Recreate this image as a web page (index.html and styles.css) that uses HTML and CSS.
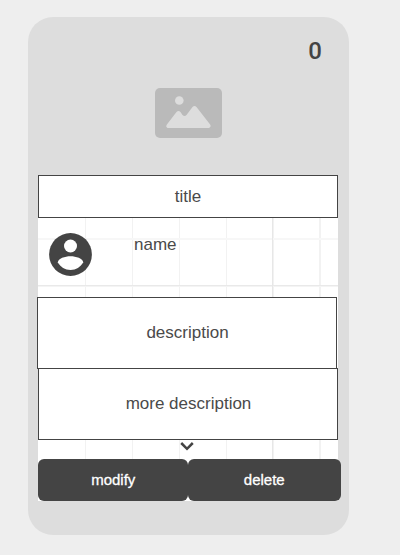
FILE: index.html
```html
<!DOCTYPE html>
<html lang="en">
<head>
<meta charset="utf-8">
<title>Card</title>
<link rel="stylesheet" href="styles.css">
</head>
<body>
<main class="card">
  <header class="cover">
    <span class="count">0</span>
    <svg class="image-icon" width="67" height="50" viewBox="0 0 67 50">
      <rect width="67" height="50" rx="5" fill="#bababa"/>
      <circle cx="24.3" cy="12.5" r="4.300" fill="#ddd"/>
      <path d="M12.500 40Q10.500 39 11.500 37L21.500 24Q23.500 22 25.500 24L27.500 27Q29.500 29 31.500 27L37.500 19Q39.500 17 41.500 19L55.500 37Q56.300 39 54 40Z" fill="#ddd"/>
    </svg>
  </header>
  <section class="panel">
    <div class="box title">title</div>
    <div class="author">
      <svg class="avatar" width="43" height="43" viewBox="0 0 43 43">
        <circle cx="21.500" cy="21.500" r="21.400" fill="#444"/>
        <circle cx="21.500" cy="13" r="6.500" fill="#fff"/>
        <path d="M8.800 29.500C9 25.500 16 23.300 21.500 23.300S34 25.500 34.200 29.500C31.500 34 27 37 21.500 37S11.500 34 8.800 29.500Z" fill="#fff"/>
      </svg>
      <span class="name">name</span>
    </div>
    <div class="box description">description</div>
    <div class="box more">more description</div>
    <div class="expand">
      <svg width="14" height="9" viewBox="0 0 14 9"><path d="M1.200 1L7 6.800L12.800 1" fill="none" stroke="#444" stroke-width="2.500"/></svg>
    </div>
    <div class="actions">
      <button class="modify">modify</button>
      <button class="delete">delete</button>
    </div>
  </section>
</main>
</body>
</html>
```
FILE: styles.css
```css
* { box-sizing: border-box; }

body {
  margin: 0;
  padding: 17px 0 0 28px;
  background: #eee;
  color: #4a4a4a;
  font: 17px/20px "Liberation Sans", Arial, sans-serif;
}

.card {
  width: 321px;
  height: 518px;
  padding: 0 10px;
  border-radius: 25px;
  background: #ddd;
}

.cover {
  display: flex;
  flex-direction: column;
  height: 158px;
  padding-top: 22px;
}

.count {
  align-self: flex-end;
  margin-right: 17px;
  color: #444;
  font: 500 24px/24px Roboto, sans-serif;
}

.image-icon {
  margin: 25px 0 0 117px;
}

.panel {
  width: 300px;
  height: 326px;
  background-color: #fff;
  background-image:
    linear-gradient(90deg, transparent 234px, #e7e7e7 234px, #e7e7e7 235px, transparent 235px),
    linear-gradient(transparent 110px, #e9e9e9 110px, #e9e9e9 111px, #f4f4f4 111px, #f4f4f4 112px, transparent 112px),
    linear-gradient(transparent 63px, #f7f7f7 63px, #f7f7f7 65px, transparent 65px),
    repeating-linear-gradient(90deg, #f2f2f2 0, #f2f2f2 1px, transparent 1px, transparent 46.900px);
  background-position: 0 0, 0 0, 0 0, 47px 0;
  background-repeat: no-repeat;
}

.box {
  display: flex;
  align-items: center;
  justify-content: center;
  width: 300px;
  height: 72px;
  border: 1px solid #444;
  background: #fff;
}

.title { height: 43px; }

.author {
  display: flex;
  height: 79px;
  padding: 15px 11px;
}

.name { margin: 2px 0 0 42px; }

.description { margin-left: -1px; padding: 0 0 1px 1px; }

.more { margin-top: -1px; padding-left: 1px; }

.expand {
  display: flex;
  justify-content: center;
  height: 19px;
  padding: 2px 2px 0 0;
}

.actions {
  display: flex;
  width: 303px;
}

.actions button {
  height: 42px;
  padding: 0;
  border: 0;
  border-radius: 6px;
  background: #444;
  color: #fff;
  font: 500 15px/20px "Liberation Sans", Arial, sans-serif;
  -webkit-text-stroke: 0.3px #fff;
}

.modify { width: 149.5px; }
.actions .modify { padding-left: 1px; }
.delete { width: 153.5px; }
```
